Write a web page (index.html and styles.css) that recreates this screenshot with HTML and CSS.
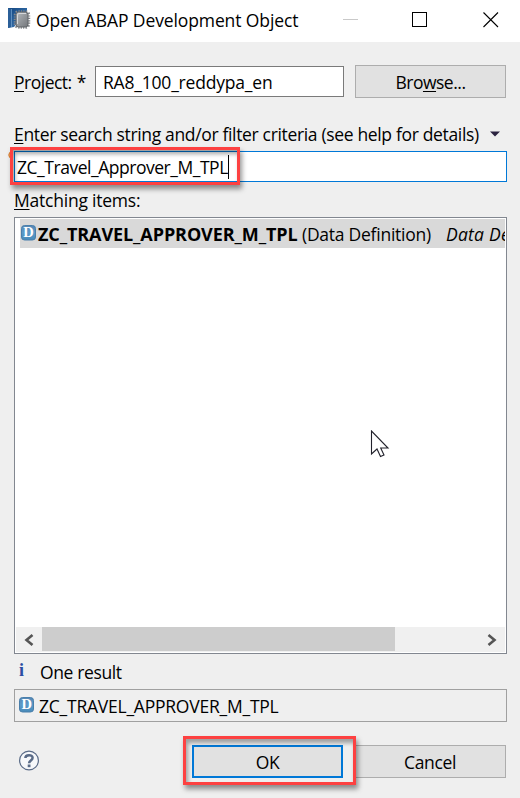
FILE: index.html
```html
<!DOCTYPE html>
<html lang="en">
<head>
<meta charset="utf-8">
<title>Open ABAP Development Object</title>
<link rel="stylesheet" href="styles.css">
</head>
<body>
<svg class="defs" width="0" height="0" aria-hidden="true">
  <defs>
    <linearGradient id="badge" x1="0" y1="0" x2="0" y2="1">
      <stop offset="0" stop-color="#5687b4"/><stop offset=".5" stop-color="#5b9bc9"/><stop offset="1" stop-color="#478ab9"/>
    </linearGradient>
    <linearGradient id="blue" x1="0" y1="0" x2="1" y2="1">
      <stop offset="0" stop-color="#13467f"/><stop offset="1" stop-color="#4380bd"/>
    </linearGradient>
    <linearGradient id="chip" x1="0" y1="0" x2="1" y2="1">
      <stop offset="0" stop-color="#b6bbc0"/><stop offset=".5" stop-color="#94989c"/><stop offset="1" stop-color="#74777b"/>
    </linearGradient>
  </defs>
</svg>
<div class="dialog">
  <header class="titlebar">
    <svg class="app-icon" width="24" height="24" viewBox="0 0 24 24">
      <path d="M1 2h19v3L7 21l-6 1z" fill="url(#blue)"/>
      <path d="M1 2l3 1v18l-3 1z" fill="#2b5f98"/>
      <path d="M4.500 3v18" stroke="#6d9cc9" stroke-width=".8"/>
      <rect x="8.500" y="6" width="13" height="15" rx="3" fill="none" stroke="#85888c" stroke-width="3.500" stroke-dasharray="1.200 1.200"/>
      <rect x="9" y="6" width="12" height="15" rx="2.500" fill="url(#chip)" stroke="#5e6266"/>
      <path d="M10.500 18V9q0-1.500 1.500-1.500h7" fill="none" stroke="#d5d8db" stroke-width="1"/>
    </svg>
    <h1 class="title">Open ABAP Development Object</h1>
    <svg class="controls" width="157" height="16" viewBox="0 0 157 16" fill="none">
      <path d="M0 7.500h15" stroke="#c9c9c9"/>
      <rect x="69.500" y=".5" width="14" height="14" stroke="#000"/>
      <path d="M140.500 .5l14.500 14.500M155 .5L140.500 15" stroke="#000" stroke-width="1.100"/>
    </svg>
  </header>

  <div class="project">
    <span class="label t-project"><u>P</u>roject: *</span>
    <div class="field project-field">RA8_100_reddypa_en</div>
    <div class="button browse">Bro<u>w</u>se...</div>
  </div>

  <div class="criteria">
    <span><u>E</u>nter search string and/or filter criteria (see help for details)</span>
    <svg width="10" height="6" viewBox="0 0 10 6"><path d="M0 .5h10L5 5.500z" fill="#2b2340"/></svg>
  </div>

  <div class="search">
    <svg class="hint" width="4" height="8" viewBox="0 0 4 8"><circle cx="4" cy="4" r="3.200" fill="#f5b06a" stroke="#dc7a2b"/></svg>
    <div class="field search-field"><span>ZC_Travel_Approver_M_TPL</span><i class="caret"></i></div>
    <div class="highlight search-highlight"></div>
  </div>

  <div class="matching"><u>M</u>atching items:</div>

  <div class="list">
    <div class="item">
      <svg class="badge" width="15" height="16" viewBox="0 0 15 16">
        <rect x=".5" y=".5" width="14" height="14.500" rx="3" fill="url(#badge)" stroke="#4a7fab"/>
        <text x="7.500" y="12.300" class="badge-letter">D</text>
      </svg>
      <b>ZC_TRAVEL_APPROVER_M_TPL</b>
      <span class="kind">(Data Definition)</span>
      <em>Data Definition</em>
    </div>
    <div class="scrollbar">
      <span class="arrow"><svg width="10" height="12" viewBox="0 0 10 12"><path d="M8.500 1L2.500 6l6 5" fill="none" stroke="#555" stroke-width="2.600"/></svg></span>
      <span class="track"><span class="thumb"></span></span>
      <span class="arrow"><svg width="10" height="12" viewBox="0 0 10 12"><path d="M1.500 1l6 5-6 5" fill="none" stroke="#555" stroke-width="2.600"/></svg></span>
    </div>
    <svg class="pointer" width="20" height="29" viewBox="0 0 20 29">
      <path d="M1.500 1v23l5.500-5 3.500 7.500 3.500-1.500-3.300-7H18z" fill="#fff" stroke="#22222c" stroke-width="1.100"/>
    </svg>
  </div>

  <div class="status">
    <span class="info">i</span>
    <span>One result</span>
  </div>

  <div class="result">
    <svg class="badge" width="15" height="16" viewBox="0 0 15 16">
      <rect x=".5" y=".5" width="14" height="14.500" rx="3" fill="url(#badge)" stroke="#4a7fab"/>
      <text x="7.500" y="12.300" class="badge-letter">D</text>
    </svg>
    <span>ZC_TRAVEL_APPROVER_M_TPL</span>
  </div>

  <footer class="actions">
    <svg class="help" width="22" height="22" viewBox="0 0 22 22" fill="none" stroke="#5a6b87">
      <circle cx="10" cy="10.500" r="9.400" fill="#f7f8fa" stroke-width="1.200"/>
      <path d="M6.400 8C6.400 4.300 13.600 4.200 13.600 7.700c0 2.700-3.500 2.700-3.500 5.500" stroke-width="2.500"/>
      <path d="M10.100 14.500v2.700" stroke-width="2.800"/>
    </svg>
    <div class="ok-wrap">
      <div class="button ok">OK</div>
      <div class="highlight ok-highlight"></div>
    </div>
    <div class="button cancel">Cancel</div>
  </footer>
</div>
</body>
</html>
```
FILE: styles.css
```css
* { box-sizing: border-box; }

body {
  margin: 0;
  background: #fff;
  color: #000;
  font: 17.5px/28px "Open Sans", sans-serif;
  white-space: nowrap;
}

u {
  text-decoration-thickness: 1px;
  text-underline-offset: 2px;
  text-decoration-skip-ink: none;
}

.defs { display: block; }

.dialog {
  width: 520px;
  height: 798px;
  overflow: hidden;
  background: #efefef;
  display: flex;
  flex-direction: column;
}

.titlebar {
  height: 42px;
  flex: none;
  display: flex;
  background: #fff;
  padding: 6px 0 0 7px;
}

.title {
  margin: 0 0 0 5px;
  width: 307px;
  font-size: 17.5px;
  font-weight: 400;
  line-height: 29px;
  letter-spacing: -0.11px;
}

.controls { margin-top: 6px; }

.field {
  background: #fff;
  border: 1px solid #7a7a7a;
  height: 31px;
}

.button {
  height: 33px;
  border: 1px solid #adadad;
  background: #e1e1e1;
  text-align: center;
  line-height: 33px;
}

.project {
  display: flex;
  margin: 23px 14px 0 14px;
}

.t-project { width: 81px; line-height: 34px; letter-spacing: -0.5px; word-spacing: 1px; }

.project-field {
  width: 249px;
  margin: 1px 11px 0 0;
  padding-left: 7px;
  line-height: 31px;
  letter-spacing: -0.2px;
}

.browse { width: 151px; letter-spacing: -0.5px; line-height: 33px; }

.criteria {
  display: flex;
  align-items: center;
  gap: 11px;
  height: 28px;
  margin: 21px 0 0 14px;
  letter-spacing: -0.34px;
}

.search {
  position: relative;
  margin: 3px 13px 0 14px;
}

.hint { position: absolute; left: -6px; top: 0; }

.search-field {
  display: flex;
  align-items: center;
  border-color: #0078d7;
  padding-left: 2px;
  line-height: 30px;
  letter-spacing: -0.47px;
}

.caret { width: 1px; height: 24px; background: #000; }

.highlight {
  position: absolute;
  border: 3px solid #fd4141;
  box-shadow: 2px 4px 5px rgba(0, 0, 0, .42), inset 2px 4px 4px rgba(0, 0, 0, .34);
}

.search-highlight { left: -4px; top: -4px; width: 230px; height: 38px; }

.matching { margin: 4px 0 0 14px; letter-spacing: -0.22px; }

.list {
  position: relative;
  display: flex;
  flex-direction: column;
  justify-content: space-between;
  width: 493px;
  height: 437px;
  margin: 3px 0 0 14px;
  padding: 1px;
  border: 1px solid #828790;
  background: #fff;
}

.item {
  display: flex;
  height: 29px;
  margin-left: 4px;
  padding-left: 1px;
  overflow: hidden;
  background: #d9d9d9;
  line-height: 30px;
}

.item > * { flex: none; }

.badge { flex: none; margin: 6px 2px 0 0; }

.badge-letter {
  font: bold 14.5px "Liberation Serif", serif;
  text-anchor: middle;
  fill: #fff;
}

.item b { width: 264px; font-size: 18px; letter-spacing: -0.1px; }
.kind { width: 144px; letter-spacing: -0.25px; }
.item em { letter-spacing: 0.25px; }

.scrollbar {
  display: flex;
  height: 25px;
  background: #f0f0f0;
}

.arrow { display: flex; align-items: center; justify-content: center; width: 26px; }
.track { flex: 1; }
.thumb { display: block; width: 353px; height: 24px; background: #cdcdcd; }

.pointer { position: absolute; left: 355px; top: 212px; }

.status {
  display: flex;
  margin: 4px 0 0 18px;
  line-height: 28px;
  letter-spacing: -0.38px;
}

.info {
  width: 22px;
  padding-left: 1px;
  line-height: 25px;
  color: #2b4da3;
  font-family: "Liberation Serif", serif;
  font-weight: 700;
  font-size: 18px;
}

.result {
  display: flex;
  width: 493px;
  height: 33px;
  margin: 3px 0 0 14px;
  padding-left: 4px;
  border: 1px solid #a0a0a0;
  line-height: 33px;
  letter-spacing: -0.23px;
}

.result .badge { margin: 7px 5px 0 0; }

.actions { display: flex; margin: 23px 14px 0 19px; }

.help { margin: 5px 151px 0 0; }

.ok-wrap { position: relative; }

.ok {
  width: 151px;
  border: 2px solid #0078d7;
  line-height: 31px;
  letter-spacing: -0.3px;
}

.ok-highlight { left: -9px; top: -9px; width: 173px; height: 49px; }

.cancel { width: 152px; margin-left: 11px; letter-spacing: -0.35px; line-height: 33px; }
```
